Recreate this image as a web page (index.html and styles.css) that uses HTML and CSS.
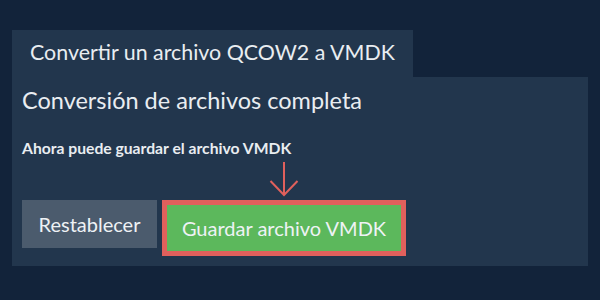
FILE: index.html
```html
<!DOCTYPE html>
<html lang="es">
<head>
<meta charset="utf-8">
<link rel="stylesheet" href="styles.css">
</head>
<body>
<div class="page">
  <div class="tab">Convertir un archivo QCOW2 a VMDK</div>
  <div class="panel">
    <h2 class="heading">Conversión de archivos completa</h2>
    <p class="note">Ahora puede guardar el archivo VMDK</p>
    <div class="actions">
      <button class="btn btn-reset">Restablecer</button>
      <div class="save-wrap">
        <svg class="arrow" width="30" height="36" viewBox="0 0 30 36">
          <path d="M15 1 V34 M1.5 20 L15 34 L28.5 20" fill="none" stroke="#e0605c" stroke-width="2"/>
        </svg>
        <div class="highlight">
          <button class="btn btn-save">Guardar archivo VMDK</button>
        </div>
      </div>
    </div>
  </div>
</div>
</body>
</html>
```

FILE: styles.css
```css
html, body {
  margin: 0;
  padding: 0;
  background: #12233a;
  font-family: Lato, "Noto Sans", sans-serif;
  color: #e9edf1;
}
.page {
  padding: 30px 12px 0 12px;
}
.tab {
  display: block;
  background: #22364d;
  height: 47px;
  width: 401px;
  box-sizing: border-box;
  padding: 8px 0 0 18px;
  font-size: 21.4px;
  line-height: 28px;
  white-space: nowrap;
}
.panel {
  background: #22364d;
  height: 189px;
  box-sizing: border-box;
  padding: 9px 10px 0 10px;
}
.heading {
  margin: 0;
  font-weight: 400;
  font-size: 23.5px;
  line-height: 28px;
}
.note {
  margin: 25px 0 0 0;
  font-weight: 700;
  font-size: 15.7px;
  line-height: 18px;
}
.actions {
  display: flex;
  align-items: flex-end;
  gap: 5px;
  margin-top: 4px;
}
.btn {
  font-family: Lato, "Noto Sans", sans-serif;
  font-size: 20px;
  color: #eef2f5;
  border: none;
  margin: 0;
  cursor: pointer;
}
.btn-reset {
  background: #4b5b6d;
  width: 135px;
  height: 48px;
  padding: 0;
  margin-bottom: 8px;
}
.save-wrap {
  display: flex;
  flex-direction: column;
  align-items: center;
}
.arrow {
  display: block;
  margin-bottom: 3px;
}
.highlight {
  border: 5px solid #e0605c;
}
.btn-save {
  display: block;
  background: #5cb85c;
  width: 234px;
  height: 46px;
  padding: 0;
}
```
